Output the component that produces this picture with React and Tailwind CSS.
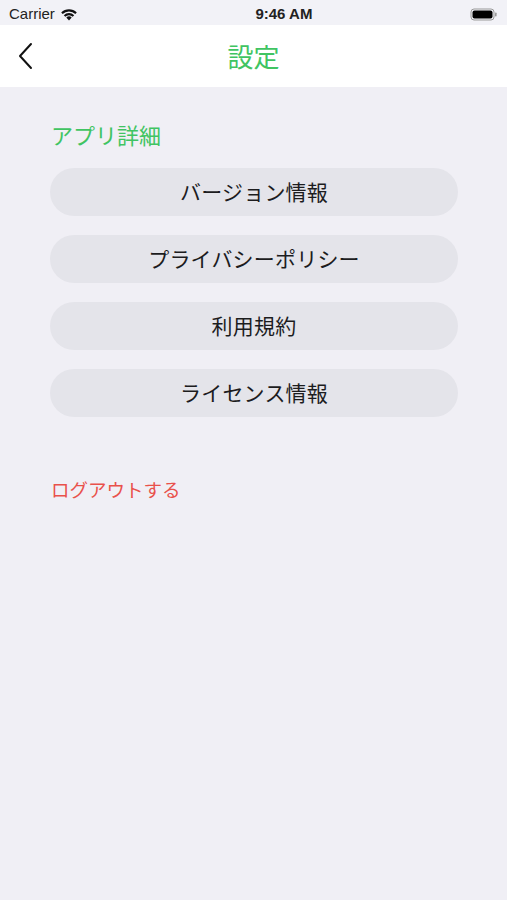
import React from "react";

const font = { fontFamily: '"Noto Sans CJK JP", "Noto Sans", "Liberation Sans", sans-serif' };

function Btn({ children }) {
  return (
    <div className="h-[48px] w-[408px] rounded-full bg-[#e4e4ea] flex items-center justify-center text-[21px] text-[#1c1c1e] tracking-[0.2px]">
      {children}
    </div>
  );
}

export default function App() {
  return (
    <div className="w-[507px] h-[900px] bg-[#f0eff5] flex flex-col" style={font}>
      <div className="h-[25px] bg-[#f2f2f7] flex items-center justify-between px-[9px] pt-[3px]">
        <div className="flex items-center gap-[5px]">
          <span className="text-[15px] text-[#222]" style={{ fontFamily: '"Liberation Sans", sans-serif' }}>Carrier</span>
          <svg width="18" height="13" viewBox="0 0 18 13">
            <path d="M9 12.5 L6.3 9.6 A4 4 0 0 1 11.7 9.6 Z" fill="#111" />
            <path d="M3.8 7.2 A7.4 7.4 0 0 1 14.2 7.2 L12.7 8.7 A5.3 5.3 0 0 0 5.3 8.7 Z" fill="#111" />
            <path d="M1.2 4.5 A11 11 0 0 1 16.8 4.5 L15.3 6 A8.9 8.9 0 0 0 2.7 6 Z" fill="#111" />
          </svg>
        </div>
        <span className="text-[15px] font-bold text-[#222] ml-[20px]" style={{ fontFamily: '"Liberation Sans", sans-serif' }}>9:46 AM</span>
        <svg width="28" height="13" viewBox="0 0 28 13">
          <rect x="1" y="1" width="23" height="11" rx="3" fill="none" stroke="#999" strokeWidth="1" />
          <rect x="2.5" y="2.5" width="20" height="8" rx="2" fill="#000" />
          <rect x="25" y="4.5" width="1.6" height="4" rx="0.8" fill="#999" />
        </svg>
      </div>
      <div className="h-[62px] bg-white relative flex items-center justify-center">
        <svg className="absolute left-[16px] top-[17px]" width="18" height="28" viewBox="0 0 18 28">
          <path d="M15 2 L4 14 L15 26" fill="none" stroke="#111" strokeWidth="2" strokeLinecap="round" strokeLinejoin="round" />
        </svg>
        <span className="text-[26px] text-[#40c462] leading-[34px]">設定</span>
      </div>
      <div className="flex flex-col px-[50px] pt-[31px]">
        <div className="text-[22px] text-[#40c462] leading-[32px] pl-[1px]">アプリ詳細</div>
        <div className="flex flex-col gap-[19px] mt-[18px]">
          <Btn>バージョン情報</Btn>
          <Btn>プライバシーポリシー</Btn>
          <Btn>利用規約</Btn>
          <Btn>ライセンス情報</Btn>
        </div>
        <div className="mt-[58px] text-[18.5px] text-[#e9514b] leading-[28px] pl-[1px]">ログアウトする</div>
      </div>
    </div>
  );
}
